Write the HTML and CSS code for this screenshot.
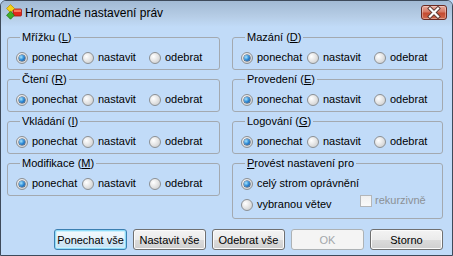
FILE: index.html
```html
<!DOCTYPE html>
<html lang="cs">
<head>
  <meta charset="UTF-8" />
  <title>Hromadné nastavení práv</title>
  <link rel="stylesheet" href="styles.css">
</head>
<body>
  <div class="window">
    <div class="titlebar">
      <svg class="app-icon" width="16" height="16" viewBox="0 0 16 16">
        <rect x="7" y="5" width="8.5" height="7" rx="1" fill="#e2291d" stroke="#a3160e" stroke-width="0.8"/>
        <rect x="8" y="5.6" width="7" height="2.4" fill="#f87a5c"/>
        <path d="M4.5 0.6 L8.6 4.5 L4.5 8.4 L0.6 4.5 Z" fill="#f6d21a" stroke="#b99400" stroke-width="0.8"/>
        <path d="M4.5 7.4 L8.4 11.2 L4.5 15.2 L0.6 11.2 Z" fill="#3fae2a" stroke="#1f7614" stroke-width="0.8"/>
      </svg>
      <span class="title">Hromadné nastavení práv</span>
      <div class="close">
        <svg width="26" height="15" viewBox="0 0 26 15">
          <path d="M9 3.5 L17 11.5 M17 3.5 L9 11.5" stroke="#5b3a33" stroke-width="4" stroke-linecap="square"/>
          <path d="M9 3.5 L17 11.5 M17 3.5 L9 11.5" stroke="#ffffff" stroke-width="2.2" stroke-linecap="square"/>
        </svg>
      </div>
    </div>

    <div class="client">
      <div class="groups">
        <div class="group">
          <div class="group-title">Mřížku (<u>L</u>)</div>
          <div class="options">
            <span class="radio checked"><i></i>ponechat</span>
            <span class="radio"><i></i>nastavit</span>
            <span class="radio"><i></i>odebrat</span>
          </div>
        </div>
        <div class="group">
          <div class="group-title">Mazání (<u>D</u>)</div>
          <div class="options">
            <span class="radio checked"><i></i>ponechat</span>
            <span class="radio"><i></i>nastavit</span>
            <span class="radio"><i></i>odebrat</span>
          </div>
        </div>

        <div class="group">
          <div class="group-title">Čtení (<u>R</u>)</div>
          <div class="options">
            <span class="radio checked"><i></i>ponechat</span>
            <span class="radio"><i></i>nastavit</span>
            <span class="radio"><i></i>odebrat</span>
          </div>
        </div>
        <div class="group">
          <div class="group-title">Provedení (<u>E</u>)</div>
          <div class="options">
            <span class="radio checked"><i></i>ponechat</span>
            <span class="radio"><i></i>nastavit</span>
            <span class="radio"><i></i>odebrat</span>
          </div>
        </div>

        <div class="group">
          <div class="group-title">Vkládání (<u>I</u>)</div>
          <div class="options">
            <span class="radio checked"><i></i>ponechat</span>
            <span class="radio"><i></i>nastavit</span>
            <span class="radio"><i></i>odebrat</span>
          </div>
        </div>
        <div class="group">
          <div class="group-title">Logování (<u>G</u>)</div>
          <div class="options">
            <span class="radio checked"><i></i>ponechat</span>
            <span class="radio"><i></i>nastavit</span>
            <span class="radio"><i></i>odebrat</span>
          </div>
        </div>

        <div class="group">
          <div class="group-title">Modifikace (<u>M</u>)</div>
          <div class="options">
            <span class="radio checked"><i></i>ponechat</span>
            <span class="radio"><i></i>nastavit</span>
            <span class="radio"><i></i>odebrat</span>
          </div>
        </div>
        <div class="group scope">
          <div class="group-title"><u>P</u>rovést nastavení pro</div>
          <div class="scope-row">
            <span class="radio checked"><i></i>celý strom oprávnění</span>
          </div>
          <div class="scope-row second">
            <span class="radio branch"><i></i>vybranou větev</span>
            <span class="check disabled"><i></i>rekurzivně</span>
          </div>
        </div>
      </div>

      <div class="buttons">
        <button class="btn default">Ponechat vše</button>
        <button class="btn">Nastavit vše</button>
        <button class="btn">Odebrat vše</button>
        <button class="btn" disabled>OK</button>
        <button class="btn">Storno</button>
      </div>
    </div>
  </div>
</body>
</html>
```

FILE: styles.css
```css
* { box-sizing: border-box; }
body {
  margin: 0;
  font-family: "Liberation Sans", Arial, sans-serif;
  font-size: 11px;
  color: #000;
  background: #c1dbf8;
}
.window {
  width: 453px; height: 256px;
  border: 1px solid #3e4a5a;
  border-radius: 6px 6px 0 0;
  background: #c1dbf8;
  overflow: hidden;
}

/* title bar */
.titlebar {
  height: 26px;
  display: flex;
  align-items: flex-start;
  padding-left: 5px;
  background: linear-gradient(#a2bad4, #b6cde6 60%, #c1dbf8);
}
.app-icon { margin-top: 3px; flex: none; }
.title {
  margin: 5px 0 0 3px;
  font-size: 12px;
  line-height: 14px;
  flex: 1;
}
.close {
  width: 26px; height: 15px;
  margin: 4px 5px 0 0;
  border: 1px solid #6a2a22;
  border-radius: 3px;
  background: linear-gradient(#e9a99a, #d67a66 45%, #c44a30 55%, #d0684d);
  box-shadow: inset 0 0 0 1px rgba(255,255,255,0.35);
  overflow: hidden;
}
.close svg { display: block; margin: -1px 0 0 -1px; }

/* client */
.client { padding: 10px 9px 0 6px; }
.groups {
  display: grid;
  grid-template-columns: 213px 211px;
  column-gap: 12px;
  row-gap: 9px;
  align-items: start;
}
.group {
  border: 1px solid #a3a9b0;
  border-radius: 3px;
  padding: 0 0 5px 8px;
}
.group-title {
  display: table;
  margin: -7px 0 0 4px;
  padding: 0 2px;
  line-height: 13px;
  background: #c1dbf8;
}
.options {
  display: grid;
  grid-template-columns: 66px 67px auto;
  margin-top: 7px;
  height: 13px;
}
.radio, .check {
  display: flex;
  align-items: center;
  height: 13px;
  line-height: 13px;
  white-space: nowrap;
}
.radio i {
  flex: none;
  width: 12px; height: 12px;
  margin-right: 4px;
  border: 1px solid #8c9094;
  border-radius: 50%;
  background: radial-gradient(circle at 35% 35%, #ffffff, #e6e6e6 45%, #c4c6c8);
  position: relative;
}
.radio.checked i::after {
  content: "";
  position: absolute;
  left: 2px; top: 2px;
  width: 6px; height: 6px;
  border-radius: 50%;
  background: radial-gradient(circle at 35% 35%, #a7e6ff, #2e8ad6 50%, #0d3f7e);
  box-shadow: 0 0 0 0.5px #1b3d66;
}

/* scope box */
.group.scope { padding-bottom: 7px; }
.scope-row { margin-top: 7px; }
.scope-row.second {
  display: flex;
  align-items: flex-start;
  margin-top: 4px;
}
.radio.branch { width: 119px; margin-top: 4px; }
.check i {
  flex: none;
  width: 12px; height: 12px;
  margin-right: 3px;
  border: 1px solid #b3b6b9;
  background: linear-gradient(#f0f0f0, #fafafa);
}
.check.disabled { color: #8c9196; }

/* buttons */
.buttons {
  display: flex;
  justify-content: flex-end;
  gap: 6px;
  margin-top: 10px;
}
.btn {
  width: 73px; height: 21px;
  padding: 0;
  font-family: "Liberation Sans", Arial, sans-serif;
  font-size: 11px;
  color: #000;
  border: 1px solid #707070;
  border-radius: 3px;
  background: linear-gradient(#f3f3f3, #ebebeb 50%, #dcdcdc 50%, #cfcfcf);
  box-shadow: inset 0 0 0 1px #fbfbfb;
}
.btn.default {
  border-color: #3c7fb1;
  background: linear-gradient(#f4fafd, #e6f2fa 50%, #d4e9f7 50%, #c8e1f3);
  box-shadow: inset 0 0 0 1px #8fdcf8, inset 0 0 0 2px #cdeffb;
}
.btn:disabled {
  color: #a3a7ab;
  border-color: #adb2b5;
  background: #f4f4f4;
  box-shadow: none;
}
```
